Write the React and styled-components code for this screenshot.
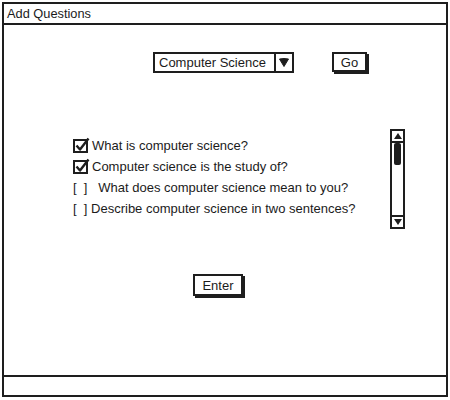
import React from "react";
import styled, { createGlobalStyle } from "styled-components";

const Global = createGlobalStyle`
  html, body { margin: 0; padding: 0; background: #fff; }
  body { font-family: "Liberation Sans", Arial, sans-serif; color: #1b1b1b; }
`;

const Window = styled.div`
  box-sizing: border-box;
  margin: 2px 0 0 2px;
  width: 446px;
  height: 395px;
  border: 2px solid #1e1e1e;
  display: flex;
  flex-direction: column;
  background: #fff;
`;

const TitleBar = styled.div`
  height: 19px;
  border-bottom: 2px solid #1e1e1e;
  font-size: 12.8px;
  line-height: 19px;
  padding-left: 3px;
  flex: none;
`;

const Body = styled.div`
  flex: 1;
  display: flex;
  flex-direction: column;
`;

const StatusBar = styled.div`
  height: 18px;
  border-top: 2px solid #1e1e1e;
  flex: none;
`;

const TopRow = styled.div`
  display: flex;
  align-items: flex-start;
  padding: 27px 0 0 149px;
`;

const Select = styled.div`
  box-sizing: border-box;
  width: 141px;
  height: 21px;
  border: 2px solid #1e1e1e;
  display: flex;
  align-items: stretch;
  font-size: 13px;
`;

const SelectText = styled.div`
  flex: 1;
  padding-left: 4px;
  line-height: 17px;
`;

const SelectArrow = styled.div`
  width: 16px;
  border-left: 2px solid #1e1e1e;
  display: flex;
  align-items: center;
  justify-content: center;
`;

const Button = styled.div`
  box-sizing: border-box;
  width: ${(p) => p.$w}px;
  height: ${(p) => p.$h}px;
  margin-left: ${(p) => p.$ml || 0}px;
  border: 2px solid #1e1e1e;
  box-shadow: 2px 2px 0 #1e1e1e;
  font-size: 13px;
  display: flex;
  align-items: center;
  justify-content: center;
  background: #fff;
`;

const ListRow = styled.div`
  display: flex;
  align-items: flex-start;
  margin-top: 56px;
  padding-left: 69px;
  padding-right: 41px;
`;

const List = styled.div`
  flex: 1;
  display: flex;
  flex-direction: column;
  padding-top: 6px;
`;

const Item = styled.div`
  height: 21px;
  display: flex;
  align-items: center;
  font-size: 13px;
  white-space: pre;
`;

const Scrollbar = styled.div`
  box-sizing: border-box;
  width: 15px;
  height: 100px;
  border: 2px solid #1e1e1e;
  display: flex;
  flex-direction: column;
  justify-content: space-between;
  position: relative;
`;

const ScrollBtn = styled.div`
  height: 10px;
  border-${(p) => (p.$top ? "bottom" : "top")}: 2px solid #1e1e1e;
  display: flex;
  align-items: center;
  justify-content: center;
`;

const Thumb = styled.div`
  position: absolute;
  left: 2px;
  top: 12px;
  width: 7px;
  height: 22px;
  border-radius: 2px;
  background: #1e1e1e;
`;

const BottomRow = styled.div`
  display: flex;
  padding: 45px 0 0 189px;
`;

const CheckIcon = () => (
  <svg width="17" height="16" viewBox="0 0 17 16" style={{ marginRight: 2, marginTop: -2 }}>
    <rect x="1" y="3" width="13" height="12" fill="#fff" stroke="#1e1e1e" strokeWidth="2" />
    <path d="M3.5 8.5 L7 12.5 L15.5 1.5" fill="none" stroke="#1e1e1e" strokeWidth="2.4" strokeLinejoin="round" />
  </svg>
);

const Tri = ({ up }) => (
  <svg width="8" height="6" viewBox="0 0 8 6">
    <path d={up ? "M0 6 L4 0 L8 6 Z" : "M0 0 L8 0 L4 6 Z"} fill="#1e1e1e" />
  </svg>
);

export default function App() {
  return (
    <>
      <Global />
      <Window>
        <TitleBar>Add Questions</TitleBar>
        <Body>
          <TopRow>
            <Select>
              <SelectText>Computer Science</SelectText>
              <SelectArrow>
                <svg width="10" height="9" viewBox="0 0 10 9">
                  <path d="M0.5 1 Q5 0 9.5 1 L5 8.5 Z" fill="#1e1e1e" stroke="#1e1e1e" strokeLinejoin="round" />
                </svg>
              </SelectArrow>
            </Select>
            <Button $w={35} $h={20} $ml={38}>Go</Button>
          </TopRow>
          <ListRow>
            <List>
              <Item><CheckIcon />What is computer science?</Item>
              <Item><CheckIcon />Computer science is the study of?</Item>
              <Item>{"[  ]   What does computer science mean to you?"}</Item>
              <Item>{"[  ] Describe computer science in two sentences?"}</Item>
            </List>
            <Scrollbar>
              <ScrollBtn $top><Tri up /></ScrollBtn>
              <Thumb />
              <ScrollBtn><Tri /></ScrollBtn>
            </Scrollbar>
          </ListRow>
          <BottomRow>
            <Button $w={50} $h={22}>Enter</Button>
          </BottomRow>
        </Body>
        <StatusBar />
      </Window>
    </>
  );
}
